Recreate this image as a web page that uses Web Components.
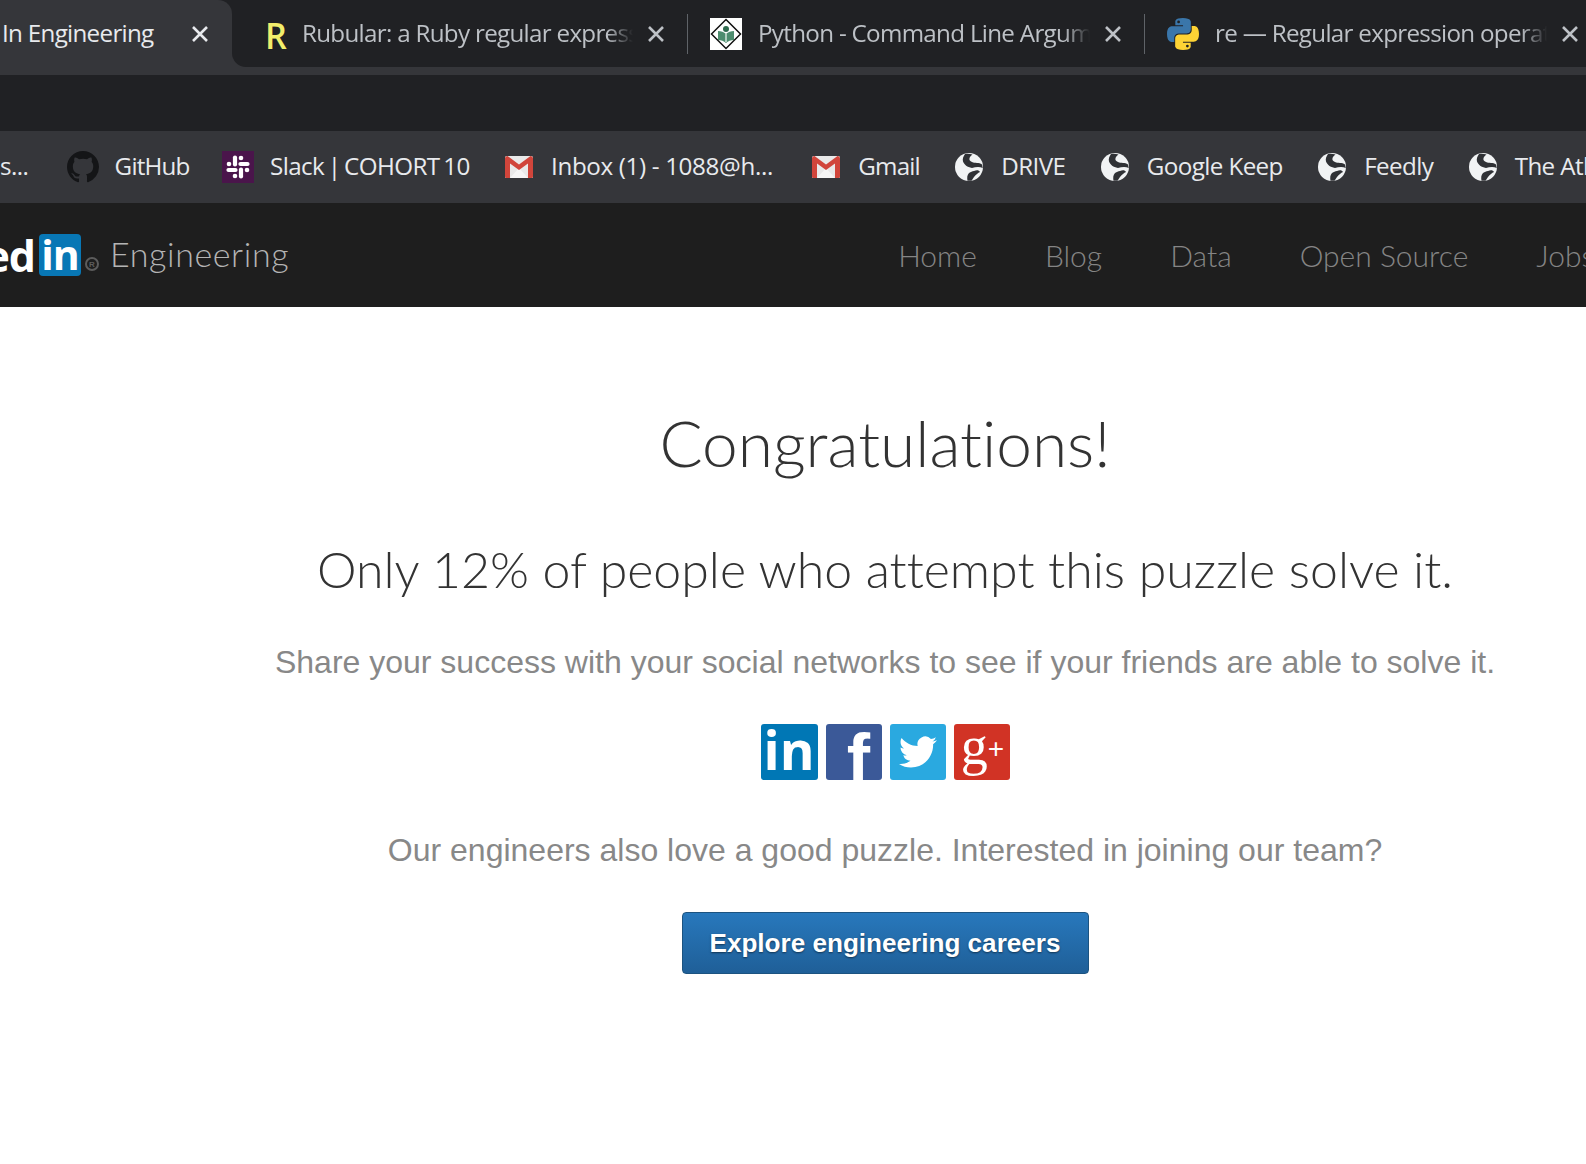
<!DOCTYPE html>
<html lang="en">
<head>
<meta charset="utf-8">
<title>LinkedIn Engineering</title>
<style>
  html, body { margin: 0; background: #fff; }
  body { width: 1586px; height: 1164px; overflow: hidden; font-family: "Liberation Sans", sans-serif; }
</style>
</head>
<body>
<browser-tabs>
  <browser-tab active title-text="In Engineering" style="width:232px"></browser-tab>
  <browser-tab icon="rubular" title-text="Rubular: a Ruby regular expression editor" style="width:455px"></browser-tab>
  <browser-tab divider icon="tutorials" title-text="Python - Command Line Arguments" style="width:457px"></browser-tab>
  <browser-tab divider icon="python" title-text="re — Regular expression operations" style="width:457px"></browser-tab>
</browser-tabs>
<bookmark-bar>
  <bookmark-item style="margin-right:5px">s...</bookmark-item>
  <bookmark-item icon="github" style="margin-right:-1px;letter-spacing:-0.800px">GitHub</bookmark-item>
  <bookmark-item icon="slack" style="word-spacing:-2px">Slack | COHORT 10</bookmark-item>
  <bookmark-item icon="gmail" style="margin-right:4px;letter-spacing:-0.350px">Inbox (1) - 1088@h...</bookmark-item>
  <bookmark-item icon="gmail" style="letter-spacing:-0.800px">Gmail</bookmark-item>
  <bookmark-item icon="globe">DRIVE</bookmark-item>
  <bookmark-item icon="globe">Google Keep</bookmark-item>
  <bookmark-item icon="globe">Feedly</bookmark-item>
  <bookmark-item icon="globe">The Atlantic</bookmark-item>
</bookmark-bar>
<site-nav></site-nav>
<puzzle-result></puzzle-result>

<script>
const ICONS = {
  rubular: `<svg viewBox="0 0 20 32" width="20" height="32" style="overflow:visible"><text transform="translate(-1 31) scale(.95 1)" font-family="Open Sans, sans-serif" font-weight="600" font-size="36" fill="#f2ee6b">R</text></svg>`,
  tutorials: `<svg viewBox="0 0 32 32" width="32" height="32"><rect width="32" height="32" fill="#fff"/><path d="M16 1.500 30.500 16 16 30.500 1.500 16z" fill="#fff" stroke="#111" stroke-width="1.500"/><path d="M8 13c3 0 6 1 8 3 2-2 5-3 8-3v9c-3 0-6 1-8 3-2-2-5-3-8-3z" fill="#4d8c6e"/><circle cx="16" cy="11" r="3" fill="#2f6b4f"/><path d="M16 16v8" stroke="#cfe3d8" stroke-width="1.500"/></svg>`,
  python: `<svg viewBox="0 0 110.600 110" width="32" height="32"><path fill="#3a76aa" d="M54.900 0C26.900 0 28.700 12.100 28.700 12.100v12.600h26.700v3.800H18.100S0 26.400 0 54.900s15.800 27.500 15.800 27.500h9.400V69.200s-.5-15.800 15.500-15.800h26.700s15 .2 15-14.500V14.600S84.700 0 54.900 0zM40.100 8.500a4.800 4.800 0 110 9.600 4.800 4.800 0 010-9.600z"/><path fill="#fdd335" d="M55.700 110c28 0 26.200-12.100 26.200-12.100V85.300H55.200v-3.800h37.300s18.100 2.100 18.100-26.400-15.800-27.500-15.800-27.500h-9.400v13.200s.5 15.800-15.500 15.800H43.200s-15-.2-15 14.500v24.300S25.900 110 55.700 110zM70.500 101.500a4.800 4.800 0 110-9.600 4.800 4.800 0 010 9.600z"/></svg>`,
  github: `<svg viewBox="0 0 16 16" width="32" height="32"><path fill="#141517" d="M8 0C3.580 0 0 3.580 0 8c0 3.540 2.290 6.530 5.470 7.590.4.070.55-.17.55-.38 0-.19-.01-.82-.01-1.490-2.010.37-2.530-.49-2.690-.94-.09-.23-.48-.94-.82-1.130-.28-.15-.68-.52-.01-.53.63-.01 1.080.58 1.230.82.72 1.210 1.870.87 2.330.66.070-.52.28-.87.51-1.070-1.780-.2-3.640-.89-3.640-3.950 0-.87.31-1.590.82-2.150-.08-.2-.36-1.020.08-2.120 0 0 .67-.21 2.200.82.64-.18 1.320-.27 2-.27s1.360.09 2 .27c1.530-1.040 2.200-.82 2.200-.82.44 1.100.16 1.920.08 2.120.51.56.82 1.270.82 2.150 0 3.070-1.870 3.750-3.650 3.950.29.25.54.73.54 1.480 0 1.070-.01 1.930-.01 2.200 0 .21.15.46.55.38A8.013 8.013 0 0016 8c0-4.420-3.580-8-8-8z"/></svg>`,
  slack: `<svg viewBox="0 0 32 32" width="32" height="32"><rect width="32" height="32" fill="#4a154b"/><g fill="none" stroke="#fff" stroke-width="4.200" stroke-linecap="round"><path d="M13 6.500v7"/><path d="M19 18.500v7"/><path d="M18.500 13h7"/><path d="M6.500 19h7"/></g><g fill="#fff"><circle cx="19" cy="7" r="2.300"/><circle cx="13" cy="25" r="2.300"/><circle cx="25" cy="19" r="2.300"/><circle cx="7" cy="13" r="2.300"/></g></svg>`,
  gmail: `<svg viewBox="-2 0 32 22" width="32" height="22"><rect width="28" height="22" rx="1.500" fill="#e9e9e9"/><path d="M5 22 14 12l9 10z" fill="#f6f6f6"/><path d="M0 2.500C0 1 1.200 0 2.500 0L14 8.500 25.500 0C26.800 0 28 1 28 2.500V20.500c0 .8-.7 1.500-1.500 1.500H23V7.500L14 14 5 7.500V22H1.500C.7 22 0 21.300 0 20.500z" fill="#d1453b"/></svg>`,
  globe: `<svg viewBox="-2 0 32 28" width="32" height="28"><circle cx="14" cy="14" r="14" fill="#f1f3f4"/><path fill="#2f3135" d="M10 1C12 .5 15 .6 17.500 1.500 14 4 13 7.500 17 9 20 10.500 24 9 27 11.500L27.800 15C24.500 13.500 20.500 14 17 15 12 14 9.500 12 8 8.500 7.200 6 8.500 3 10 1z"/><path fill="#2f3135" d="M19 18C21.500 17 24 17 25 19 23 20 21 21.500 19 24L16.500 27.800 12.500 27.800C12 25 12 22 14 20 16 18.500 17 18.500 19 18z"/></svg>`
};

class BrowserTabs extends HTMLElement {
  constructor() {
    super();
    this.attachShadow({ mode: 'open' });
    this.shadowRoot.innerHTML = `
      <style>
        :host { display: block; background: #202124; height: 131px; overflow: hidden; }
        .row { display: flex; height: 67px; background: linear-gradient(#202124 50%, #35363a 50%); }
        .band { height: 8px; background: #35363a; }
      </style>
      <div class="row"><slot></slot></div>
      <div class="band"></div>
    `;
  }
}

class BrowserTab extends HTMLElement {
  constructor() {
    super();
    this.attachShadow({ mode: 'open' });
  }

  connectedCallback() {
    const icon = ICONS[this.getAttribute('icon')] || '';
    this.shadowRoot.innerHTML = `
      <style>
        :host {
          display: flex; flex: none; box-sizing: border-box; height: 67px; position: relative;
          align-items: center; background: #202124; color: #bdc1c6;
          font: 24.200px "Open Sans", sans-serif; letter-spacing: -0.700px; padding-left: 23px;
        }
        :host([icon="rubular"]) { padding-left: 34px; border-bottom-left-radius: 14px; }
        :host([active]) { background: #35363a; color: #e8eaed; padding-left: 2px; border-top-right-radius: 14px; }
        :host([divider]) .sep { display: block; }
        .sep { display: none; position: absolute; left: 0; top: 14px; height: 40px; width: 1px; background: #5f6368; }
        .ico { flex: none; display: flex; width: 32px; justify-content: flex-start; margin-right: 16px; }
        :host([icon="rubular"]) .ico { width: 20px; margin-right: 16px; }
        :host([active]) .ico { display: none; }
        .title { flex: 1; min-width: 0; white-space: nowrap; overflow: hidden; padding-bottom: 2px; -webkit-mask-image: linear-gradient(90deg, #000 calc(100% - 26px), transparent); }
        :host([active]) .title { -webkit-mask-image: none; }
        svg.x { flex: none; width: 18px; height: 18px; margin: 0 22px 0 14px; }
        :host([active]) svg.x { margin: 0 23px 0 0; }
      </style>
      <span class="sep"></span>
      <span class="ico">${icon}</span>
      <span class="title">${this.getAttribute('title-text')}</span>
      <svg class="x" viewBox="0 0 18 18"><path d="M2 2l14 14M16 2 2 16" stroke="currentColor" stroke-width="2.600" fill="none"/></svg>
    `;
  }
}

class BookmarkBar extends HTMLElement {
  constructor() {
    super();
    this.attachShadow({ mode: 'open' });
    this.shadowRoot.innerHTML = `
      <style>
        :host { display: block; background: #35363a; height: 72px; overflow: hidden; }
        .row { display: flex; align-items: center; gap: 33.400px; height: 72px; white-space: nowrap; }
      </style>
      <div class="row"><slot></slot></div>
    `;
  }
}

class BookmarkItem extends HTMLElement {
  constructor() {
    super();
    this.attachShadow({ mode: 'open' });
  }

  connectedCallback() {
    const icon = ICONS[this.getAttribute('icon')] || '';
    this.shadowRoot.innerHTML = `
      <style>
        :host {
          display: inline-flex; flex: none; align-items: center; gap: 16px;
          color: #e8eaed; font: 24.200px "Open Sans", sans-serif; letter-spacing: -0.600px;
        }
        .ico { display: flex; }
        .ico:empty { display: none; }
        .txt { padding-bottom: 4px; }
      </style>
      <span class="ico">${icon}</span><span class="txt"><slot></slot></span>
    `;
  }
}

class SiteNav extends HTMLElement {
  constructor() {
    super();
    this.attachShadow({ mode: 'open' });
    this.shadowRoot.innerHTML = `
      <style>
        :host { display: flex; align-items: center; height: 104px; background: #1e1e1e; overflow: hidden; white-space: nowrap; font-family: Lato, sans-serif; font-weight: 300; font-variant-ligatures: none; }
        .ed { flex: none; width: 35px; display: flex; justify-content: flex-end; overflow: hidden; color: #fff; font: bold 43px "Open Sans", sans-serif; letter-spacing: -1px; }
        .in { flex: none; width: 42px; height: 42px; margin-left: 4px; border-radius: 4px; background: #0877b5; color: #fff; font: bold 41px/40px "Open Sans", sans-serif; text-align: center; letter-spacing: -1px; }
        .reg { display: flex; flex: none; align-self: flex-end; align-items: center; justify-content: center; box-sizing: border-box; width: 14px; height: 14px; margin: 0 0 36px 4px; border: 2px solid #5c5c5c; border-radius: 50%; color: #5c5c5c; font: bold 8px "Liberation Sans", sans-serif; }
        .name { margin-left: 11px; color: #b4b4b4; font-size: 34px; letter-spacing: 0.600px; padding-bottom: 4px; }
        nav { display: flex; gap: 68px; margin-left: 609px; color: #858585; font-size: 30px; }
      </style>
      <span class="ed">ed</span><span class="in">in</span><span class="reg">R</span>
      <span class="name">Engineering</span>
      <nav><span>Home</span><span>Blog</span><span>Data</span><span>Open Source</span><span>Jobs</span></nav>
    `;
  }
}

class ShareIcon extends HTMLElement {
  constructor() {
    super();
    this.attachShadow({ mode: 'open' });
  }

  connectedCallback() {
    const net = this.getAttribute('net');
    const inner = {
      linkedin: `<span class="in">in</span>`,
      facebook: `<span class="f">f</span>`,
      twitter: `<svg viewBox="0 0 24 24" width="38" height="38"><path fill="#fff" d="M23.953 4.570a10 10 0 01-2.825.775 4.958 4.958 0 002.163-2.723c-.951.555-2.005.959-3.127 1.184a4.920 4.920 0 00-8.384 4.482C7.690 8.095 4.067 6.130 1.640 3.162a4.822 4.822 0 00-.666 2.475c0 1.710.870 3.213 2.188 4.096a4.904 4.904 0 01-2.228-.616v.060a4.923 4.923 0 003.946 4.827 4.996 4.996 0 01-2.212.085 4.936 4.936 0 004.604 3.417 9.867 9.867 0 01-6.102 2.105c-.390 0-.779-.023-1.170-.067a13.995 13.995 0 007.557 2.209c9.053 0 13.998-7.496 13.998-13.985 0-.210 0-.420-.015-.630A9.935 9.935 0 0024 4.590z"/></svg>`,
      google: `<span class="g">g</span><span class="plus">+</span>`
    }[net];
    this.shadowRoot.innerHTML = `
      <style>
        :host { display: flex; flex: none; width: 56px; height: 56px; border-radius: 3px; overflow: hidden; align-items: center; justify-content: center; color: #fff; }
        :host([net="linkedin"]) { width: 57px; background: #0077b5; }
        :host([net="facebook"]) { background: #3b5998; }
        :host([net="twitter"]) { background: #2aa9e0; }
        :host([net="google"]) { background: #d13325; }
        .in { font: bold 53px/56px "Open Sans", sans-serif; padding-bottom: 4px; }
        .f { font: bold 70px/56px "Liberation Sans", sans-serif; padding: 14px 0 0 10px; }
        .g { font: 54px/56px "Liberation Serif", serif; padding-bottom: 12px; }
        .plus { font: 28px/24px "Liberation Sans", sans-serif; padding-bottom: 6px; margin-right: -2px; }
      </style>
      ${inner}
    `;
  }
}

class PuzzleResult extends HTMLElement {
  constructor() {
    super();
    this.attachShadow({ mode: 'open' });
    this.shadowRoot.innerHTML = `
      <style>
        :host { display: flex; flex-direction: column; align-items: center; padding-left: 184px; }
        h1, h2 { margin: 0; color: #333; font-family: Lato, sans-serif; font-weight: 300; white-space: nowrap; font-variant-ligatures: none; }
        h1 { margin-top: 96px; font-size: 64px; line-height: 80px; }
        h2 { margin-top: 56px; font-size: 50px; line-height: 60px; }
        p { margin: 0; color: #888; font: 32px/40px "Liberation Sans", sans-serif; white-space: nowrap; }
        .share { margin-top: 43px; }
        .icons { display: flex; gap: 8px; margin-top: 42px; }
        .join { margin-top: 50px; }
        a {
          display: block; box-sizing: border-box; width: 407px; height: 62px; margin-top: 42px;
          border: 1px solid #1c5380; border-radius: 4px; background: linear-gradient(#2878bc, #1f5f98);
          color: #fff; font: bold 26.100px/60px "Liberation Sans", sans-serif; text-align: center;
          text-shadow: 0 1px 2px rgba(0, 0, 0, 0.5);
        }
      </style>
      <h1>Congratulations!</h1>
      <h2>Only 12% of people who attempt this puzzle solve it.</h2>
      <p class="share">Share your success with your social networks to see if your friends are able to solve it.</p>
      <div class="icons">
        <share-icon net="linkedin"></share-icon>
        <share-icon net="facebook"></share-icon>
        <share-icon net="twitter"></share-icon>
        <share-icon net="google"></share-icon>
      </div>
      <p class="join">Our engineers also love a good puzzle. Interested in joining our team?</p>
      <a>Explore engineering careers</a>
    `;
  }
}

customElements.define('browser-tabs', BrowserTabs);
customElements.define('browser-tab', BrowserTab);
customElements.define('bookmark-bar', BookmarkBar);
customElements.define('bookmark-item', BookmarkItem);
customElements.define('site-nav', SiteNav);
customElements.define('share-icon', ShareIcon);
customElements.define('puzzle-result', PuzzleResult);
</script>
</body>
</html>
